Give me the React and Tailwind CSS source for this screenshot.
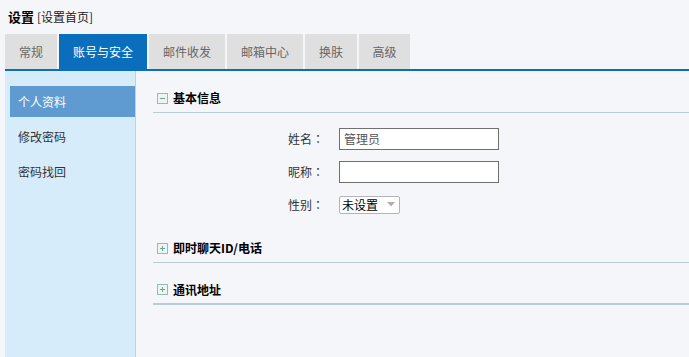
const tabs = ['常规', '账号与安全', '邮件收发', '邮箱中心', '换肤', '高级'];
const tabWidths = ['w-[52px]', 'w-[88px]', 'w-[76px]', 'w-[76px]', 'w-[52px]', 'w-[51px]'];
const menu = ['个人资料', '修改密码', '密码找回'];

function SectionHeader({ title, open, thick }) {
  return (
    <div
      className={`flex items-center pl-[4px] pb-[1px] border-[#b9ccd0] ${
        thick ? 'h-[29px] border-b-2 pt-[1px]' : 'h-[28px] border-b'
      }`}
    >
      <span className="w-[11px] h-[11px] border border-[#8fbfae] bg-[#eef5f1] flex items-center justify-center">
        <svg width="7" height="7" viewBox="0 0 7 7">
          <path d="M1 3.5H6" stroke="#6aa88f" strokeWidth="1" />
          {!open && <path d="M3.5 1V6" stroke="#6aa88f" strokeWidth="1" />}
        </svg>
      </span>
      <span className="ml-[5px] text-[12px] font-bold text-black">{title}</span>
    </div>
  );
}

function Row({ label, children }) {
  return (
    <div className="h-[33px] flex items-center">
      <span className="w-[171px] text-right text-[12px] text-[#333]">
        {label}
        <span style={{ fontFamily: '"Noto Sans CJK TC", sans-serif' }}>：</span>
      </span>
      <div className="ml-[15px]">{children}</div>
    </div>
  );
}

export default function App() {
  return (
    <div
      className="w-[689px] h-[357px] bg-[#f5f6fa] overflow-hidden flex flex-col"
      style={{ fontFamily: '"Noto Sans CJK SC", "Noto Sans", sans-serif' }}
    >
      <div className="h-[34px] flex items-center pl-[8px] gap-[3px]">
        <span className="text-[13px] font-bold text-black">设置</span>
        <span className="text-[12px] text-[#222]">[设置首页]</span>
      </div>

      <div className="flex gap-[2px] pl-[5px] h-[35px]">
        {tabs.map((t, i) => (
          <div
            key={t}
            className={`${tabWidths[i]} flex items-center justify-center text-[12px] ${
              i === 1 ? 'bg-[#0a6ebd] text-white' : 'bg-[#dfdfdf] text-[#666]'
            }`}
          >
            {t}
          </div>
        ))}
      </div>
      <div className="ml-[5px] h-[2px] bg-[#0a6ebd]" />

      <div className="flex flex-1 ml-[5px]">
        <div className="w-[131px] bg-[#d7ecfb] border-r border-[#c3d0da] pt-[15px] flex flex-col gap-[4px]">
          {menu.map((m, i) => (
            <div
              key={m}
              className={`h-[31px] ml-[5px] pl-[8px] flex items-center text-[12px] ${
                i === 0 ? 'bg-[#5f9ad0] text-white' : 'text-[#333]'
              }`}
            >
              {m}
            </div>
          ))}
        </div>

        <div className="flex-1 pl-[17px] pt-[14px]">
          <SectionHeader title="基本信息" open />
          <div className="pt-[9px]">
            <Row label="姓名">
              <div className="w-[160px] h-[22px] border border-[#707070] bg-white flex items-center pl-[4px] text-[12px] text-[#555]">
                管理员
              </div>
            </Row>
            <Row label="昵称">
              <div className="w-[160px] h-[22px] border border-[#707070] bg-white" />
            </Row>
            <Row label="性别">
              <div className="w-[61px] h-[18px] border border-[#b4b4b4] rounded-[2px] bg-white flex items-center justify-between pl-[2px] pr-[4px] text-[12px] text-black">
                <span>未设置</span>
                <svg width="8" height="5" viewBox="0 0 8 5">
                  <path d="M0 0H8L4 4.5Z" fill="#b0b0b0" />
                </svg>
              </div>
            </Row>
          </div>
          <div className="mt-[14px]">
            <SectionHeader title="即时聊天ID/电话" />
          </div>
          <div className="mt-[13px]">
            <SectionHeader title="通讯地址" thick />
          </div>
        </div>
      </div>
    </div>
  );
}
